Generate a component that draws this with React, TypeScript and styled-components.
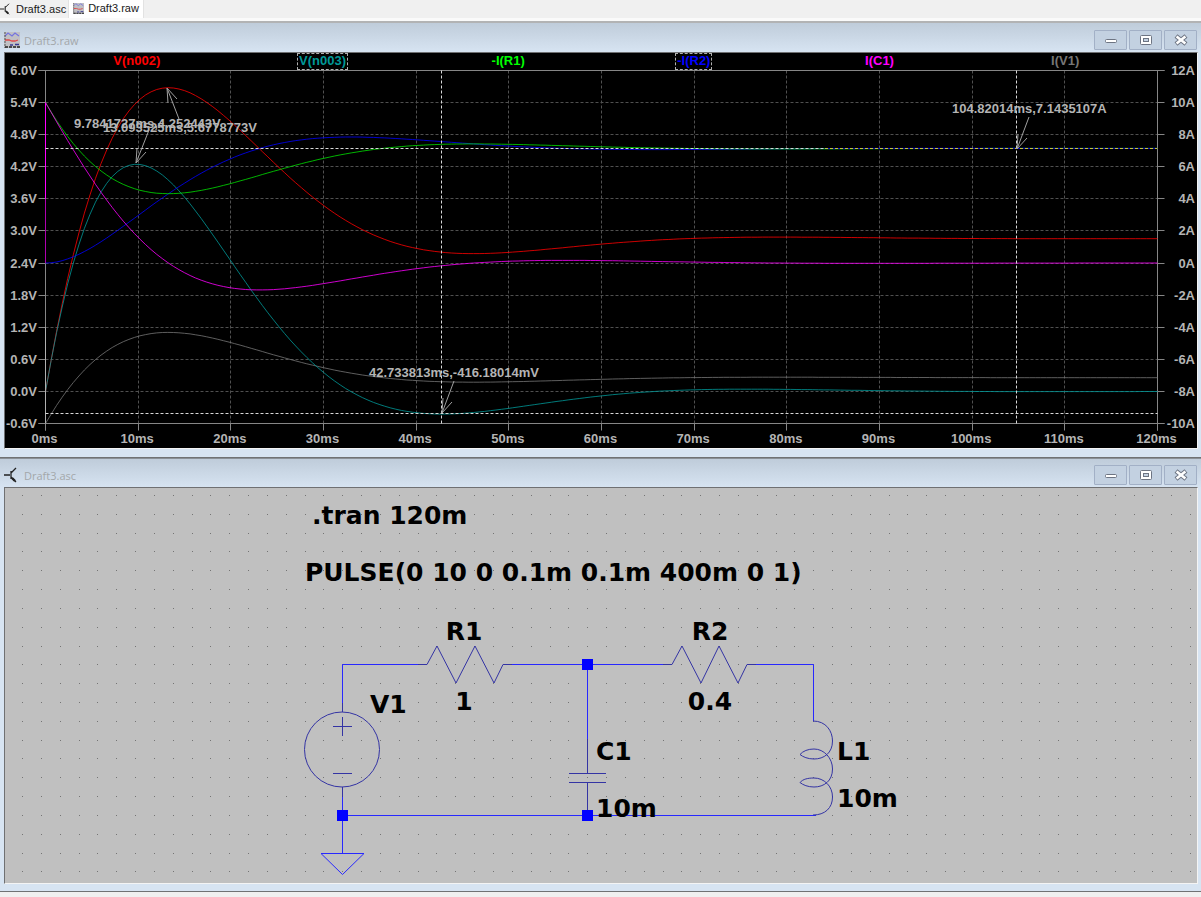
import React from "react";
import styled, { createGlobalStyle } from "styled-components";

const GlobalStyle = createGlobalStyle`
  * { box-sizing: border-box; }
  body { margin: 0; background: #f0f0f0; font-family: "Open Sans", sans-serif; }
`;

const Page = styled.main`
  display: flex;
  flex-direction: column;
  width: 100%;
`;

const TabBar = styled.nav`
  display: flex;
  align-items: flex-start;
  height: 21px;
  background: #f0f0f0;
  border-bottom: 3px solid #fafafa;
`;

const Tab = styled.button<{ $active?: boolean }>`
  display: flex;
  align-items: center;
  gap: 4px;
  height: 18px;
  padding: ${(p) => (p.$active ? "0 4px 2px 4px" : "0 2px 0 0")};
  border: 0;
  border-right: 1px solid #e2e2e2;
  background: ${(p) => (p.$active ? "#ffffff" : "#f0f0f0")};
  color: #1a1a1a;
  font: 11px/16px "Liberation Sans", sans-serif;
`;

const Frame = styled.section<{ $first?: boolean }>`
  display: flex;
  flex-direction: column;
  border-top: ${(p) => (p.$first ? "2px solid #b2b3b4" : "1px solid #8a9097")};
  border-bottom: 1px solid #707274;
  padding: ${(p) => (p.$first ? "1px 3px 8px 4px" : "0 3px 7px 4px")};
  background: linear-gradient(#bfccda, #d7e4f2 29px);
`;

const TitleBar = styled.header`
  display: flex;
  align-items: center;
  gap: 4px;
  height: 28px;
  padding: 4px 1px 0 0;
`;

const Title = styled.h2`
  flex: 1;
  margin: 0;
  padding-top: 2px;
  color: #a3a7aa;
  font: 11px/16px "Open Sans", sans-serif;
`;

const Controls = styled.div`
  display: flex;
  gap: 2px;
`;

const ControlButton = styled.button`
  display: grid;
  place-items: center;
  width: 33px;
  height: 20px;
  padding: 0;
  border: 1px solid #a2b0c6;
  border-radius: 1px;
  background: #c3d1e1;
`;

const Client = styled.div<{ $bg: string }>`
  border: 1px solid #6f7072;
  border-right-color: #f4f4f4;
  border-bottom-color: #f4f4f4;
  background: ${(p) => p.$bg};
`;

const Legend = styled.ul`
  display: grid;
  grid-template-columns: repeat(6, 1fr);
  justify-items: center;
  height: 17px;
  margin: 0;
  padding: 0 39px;
  list-style: none;
`;

const LegendItem = styled.li<{ $color: string; $selected?: boolean }>`
  height: 17px;
  padding: 0 2px;
  color: ${(p) => p.$color};
  outline: ${(p) => (p.$selected ? "1px dashed #b0b0b0" : "none")};
  outline-offset: -1px;
  font: bold 13px/16px "Liberation Sans", sans-serif;
`;

const Drawing = styled.svg`
  display: block;
  width: 100%;
  height: auto;
  overflow: visible;
`;

const PlotText = styled.text`
  fill: #b4b4b4;
  font: bold 13px "Liberation Sans", sans-serif;
`;

const PartText = styled.text`
  fill: #000000;
  font: bold 25px "DejaVu Sans", sans-serif;
`;

const SchematicIcon = ({ size }: { size: number }) => (
  <svg width={size} height={size} viewBox="0 0 16 16" aria-hidden="true">
    <g fill="none" stroke="#222" strokeWidth="1.3">
      <path d="M0 8H6M7 4V12M7 6L12 1M7 10L12 15" />
      <path d="M8 11L11 14" strokeWidth="2.4" />
    </g>
  </svg>
);

const WaveIcon = ({ size }: { size: number }) => (
  <svg width={size} height={size} viewBox="0 0 16 16" aria-hidden="true">
    <rect x="0" y="0" width="16" height="16" fill="#c0c0c4" />
    <path d="M1 4L4 1L8 4L11 1L15 4" fill="none" stroke="#7474e0" strokeWidth="1.2" />
    <path d="M1 8H5L8 9L11 9L14 8" fill="none" stroke="#e04848" strokeWidth="1.3" />
    <path d="M1 0V16" fill="none" stroke="#555" strokeDasharray="2 1" />
    <path d="M1 15H16" fill="none" stroke="#222" strokeWidth="1.6" strokeDasharray="3 1" />
    <path d="M6 13H9M11 12.5H15" fill="none" stroke="#3a3a90" strokeWidth="1.3" />
  </svg>
);

const WindowControls = () => (
  <Controls>
    <ControlButton aria-label="Minimize">
      <svg width="14" height="12" viewBox="0 0 14 12">
        <rect x="1.5" y="5.5" width="11" height="3" rx="1" fill="#fff" stroke="#6d7482" />
      </svg>
    </ControlButton>
    <ControlButton aria-label="Restore">
      <svg width="14" height="12" viewBox="0 0 14 12">
        <rect x="1.5" y="1.5" width="11" height="9" rx="1" fill="#fff" stroke="#6d7482" />
        <rect x="4.5" y="4.5" width="5" height="3" fill="#c3d1e1" stroke="#6d7482" />
      </svg>
    </ControlButton>
    <ControlButton aria-label="Close">
      <svg width="14" height="12" viewBox="0 0 14 12">
        <path d="M2 2L12 10M12 2L2 10" stroke="#6d7482" strokeWidth="4.6" />
        <path d="M2.6 2.5L11.4 9.500M11.4 2.5L2.6 9.500" stroke="#fff" strokeWidth="2.6" />
      </svg>
    </ControlButton>
  </Controls>
);

const X0 = 40.5;
const X1 = 1152.5;
const Y0 = 0.5;
const Y1 = 353.5;

const crisp = (n: number) => Math.floor(n) + 0.5;
const xOf = (ms: number) => X0 + ((X1 - X0) * ms) / 120;
const yVolt = (v: number) => Y0 + ((6 - v) * (Y1 - Y0)) / 6.6;
const yAmp = (a: number) => Y0 + ((12 - a) * (Y1 - Y0)) / 22;
const yStep = (i: number) => crisp(yAmp(12 - i * 2));

interface Sample {
  t: number;
  vc: number;
  il: number;
}

// Transient response of the R1-C1-R2-L1 network to the 10 V step.
function simulate(): Sample[] {
  const h = 0.00002;
  const out: Sample[] = [];
  let vc = 0;
  let il = 0;
  const dv = (v: number, i: number) => (10 - v - i) / 0.01;
  const di = (v: number, i: number) => (v - 0.4 * i) / 0.01;
  for (let n = 0; n <= 6000; n++) {
    if (n % 30 === 0) out.push({ t: n * 0.02, vc, il });
    const mv = vc + (dv(vc, il) * h) / 2;
    const mi = il + (di(vc, il) * h) / 2;
    vc += dv(mv, mi) * h;
    il += di(mv, mi) * h;
  }
  return out;
}

const samples = simulate();
const trace = (f: (s: Sample) => number) =>
  samples.map((s) => `${xOf(s.t).toFixed(1)},${f(s).toFixed(1)}`).join(" ");

const traces = [
  { color: "#767676", points: trace((s) => yAmp(s.vc - 10)) },
  { color: "#ff0000", points: trace((s) => yVolt(s.vc)) },
  { color: "#009898", points: trace((s) => yVolt(s.vc - 0.4 * s.il)) },
  { color: "#0000ff", points: trace((s) => yAmp(s.il)) },
  { color: "#00e000", points: trace((s) => yAmp(10 - s.vc)) },
  { color: "#ff00ff", points: trace((s) => yAmp(10 - s.vc - s.il)) },
];

const steps = Array.from({ length: 12 }, (_, i) => i);
const columns = Array.from({ length: 13 }, (_, i) => i);

const Callout = ({ x, y, dx, dy }: { x: number; y: number; dx: number; dy: number }) => {
  const s = Math.sign(dy);
  return (
    <path
      d={`M${x + dx} ${y + dy}L${x} ${y}M${x + 1} ${y + 15 * s}L${x} ${y}L${x + 10} ${y + 11 * s}`}
      fill="none"
      stroke="#a0a0a0"
    />
  );
};

const Waveforms = () => (
  <Drawing viewBox="0 0 1192 378" role="img" aria-label="Waveform plot">
    <g stroke="#505050" strokeDasharray="3 2">
      {steps.slice(1, 11).map((i) => (
        <path key={`h${i}`} d={`M${X0} ${yStep(i)}H${X1}`} />
      ))}
      {columns.slice(1, 12).map((i) => (
        <path key={`v${i}`} d={`M${crisp(xOf(i * 10))} ${Y0}V${Y1}`} />
      ))}
    </g>
    <g stroke="#868686" fill="none">
      <path d={`M${X0 - 7} ${Y0}H${X1 + 7}M${X0 - 7} ${Y1}H${X1 + 7}M${X0} ${Y0}V${Y1 + 7}M${X1} ${Y0}V${Y1 + 7}`} />
      {steps.map((i) => (
        <path key={i} d={`M${X0 - 7} ${yStep(i)}h7M${X1} ${yStep(i)}h7`} />
      ))}
      {columns.map((i) => (
        <path key={i} d={`M${crisp(xOf(i * 10))} ${Y1}v7`} />
      ))}
    </g>
    {traces.map((t) => (
      <polyline key={t.color} points={t.points} fill="none" stroke={t.color} strokeOpacity="0.8" />
    ))}
    <path d={`M${X0} ${yAmp(10)}V${yAmp(4)}`} stroke="#ff00ff" />
    <path d={`M${X0} ${yAmp(4)}V${yAmp(0)}`} stroke="#b000b0" />
    <path d={`M${X0} ${yAmp(-4)}V${Y1}`} stroke="#b0b0b0" />
    <path d={`M820 78.5H${X1}`} stroke="#1010c8" />
    <g stroke="#d8d8d8" strokeDasharray="3 2">
      <path d={`M${X0} 78.5H820M${X0} 343.5H${X1}`} />
      <path d={`M436.5 ${Y0}V${Y1}M1011.5 ${Y0}V${Y1}`} />
      <path d={`M820 78.5H${X1}`} stroke="#c4c440" />
    </g>
    <Callout x={162} y={18} dx={12} dy={31} />
    <Callout x={131} y={93} dx={13} dy={-33} />
    <Callout x={437} y={343} dx={12} dy={-32} />
    <Callout x={1012} y={79} dx={12} dy={-32} />
    <PlotText x="69" y="58">9.7841727ms,4.252443V</PlotText>
    <PlotText x="98" y="62">13.093525ms,5.6778773V</PlotText>
    <PlotText x="364" y="307">42.733813ms,-416.18014mV</PlotText>
    <PlotText x="947" y="43">104.82014ms,7.1435107A</PlotText>
    {steps.map((i) => (
      <React.Fragment key={i}>
        <PlotText x="32" y={4.5 + yStep(i)} textAnchor="end">{(6 - i * 0.6).toFixed(1)}V</PlotText>
        <PlotText x="1190" y={4.5 + yStep(i)} textAnchor="end">{12 - i * 2}A</PlotText>
      </React.Fragment>
    ))}
    {columns.map((i) => (
      <PlotText key={i} x={xOf(i * 10) - 1} y="373" textAnchor="middle">{i * 10}ms</PlotText>
    ))}
  </Drawing>
);

const gridDots = Array.from({ length: 21 }, (_, row) =>
  Array.from(
    { length: 63 },
    (_, col) => `M${Math.round(17 + col * 18.84)} ${Math.round(6 + row * 18.82) + 0.5}h1`
  ).join("")
).join("");

const Schematic = () => (
  <Drawing viewBox="0 -1 1192 395" role="img" aria-label="Circuit schematic">
    <path d={gridDots} stroke="#747474" />
    <g fill="none" stroke="#2828ff">
      <path d="M337.5 214V175.5H413M507 175.5H658M751 175.5H808.5V232" />
      <path d="M582.5 175V250M337.5 308V364.5M337 326.5H811" />
      <path d="M316 364.5H359L337.5 385.5Z" />
    </g>
    <g fill="none" stroke="#3434a4">
      <path d="M413 175.5H422L432 157L451 194L470 157L489 194L498 175.5H507" />
      <path d="M658 175.5H667L677 157L696 194L714 157L733 194L742 175.5H751" />
      <circle cx="337" cy="260.5" r="37.5" />
      <path d="M337.5 214V223M337.5 298V308M328 237.5H347M337.5 228V247M328 284.5H347" />
      <path d="M582.5 250V284.5M564 284.5H601M564 293.5H601M582.5 293.5V326" />
      <path d="M808 232C821 232 827.5 242 827.5 252C827.5 264 819 270 809 270C803 270 798 268 795 265.5C798 262 803 260 809 260C819 260 827.5 269 827.5 280C827.5 292 819 298 809 298C803 298 798 296 795 293.5C798 290 803 289 809 289C819 289 827.5 297 827.5 308C827.5 319 820 326 808 326" />
    </g>
    <g fill="#0000ff">
      <rect x="577" y="170" width="11" height="11" />
      <rect x="577" y="321" width="11" height="11" />
      <rect x="332" y="321" width="11" height="11" />
    </g>
    <PartText x="307" y="35">.tran 120m</PartText>
    <PartText x="300" y="92">PULSE(0 10 0 0.1m 0.1m 400m 0 1)</PartText>
    <PartText x="459" y="151" textAnchor="middle">R1</PartText>
    <PartText x="459" y="221" textAnchor="middle">1</PartText>
    <PartText x="705" y="151" textAnchor="middle">R2</PartText>
    <PartText x="705" y="221" textAnchor="middle">0.4</PartText>
    <PartText x="365" y="224">V1</PartText>
    <PartText x="591" y="271">C1</PartText>
    <PartText x="591" y="328">10m</PartText>
    <PartText x="832" y="271">L1</PartText>
    <PartText x="832" y="318">10m</PartText>
  </Drawing>
);

export default function App() {
  return (
    <Page>
      <GlobalStyle />
      <TabBar>
        <Tab><SchematicIcon size={12} />Draft3.asc</Tab>
        <Tab $active><WaveIcon size={11} />Draft3.raw</Tab>
      </TabBar>
      <Frame $first>
        <TitleBar>
          <WaveIcon size={16} />
          <Title>Draft3.raw</Title>
          <WindowControls />
        </TitleBar>
        <Client $bg="#000000">
          <Legend>
            <LegendItem $color="#ff0000">V(n002)</LegendItem>
            <LegendItem $color="#009898" $selected>V(n003)</LegendItem>
            <LegendItem $color="#00ff00">-I(R1)</LegendItem>
            <LegendItem $color="#0000ff" $selected>-I(R2)</LegendItem>
            <LegendItem $color="#ff00ff">I(C1)</LegendItem>
            <LegendItem $color="#767676">I(V1)</LegendItem>
          </Legend>
          <Waveforms />
        </Client>
      </Frame>
      <Frame>
        <TitleBar>
          <SchematicIcon size={16} />
          <Title>Draft3.asc</Title>
          <WindowControls />
        </TitleBar>
        <Client $bg="#c0c0c0">
          <Schematic />
        </Client>
      </Frame>
    </Page>
  );
}
